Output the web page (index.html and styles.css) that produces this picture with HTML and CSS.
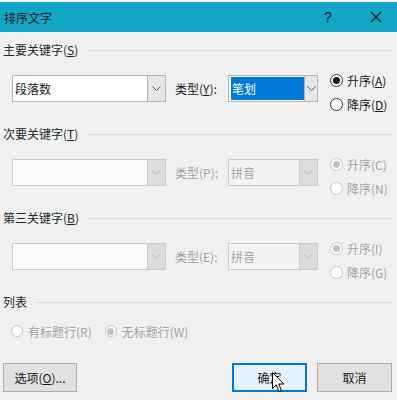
FILE: index.html
```html
<!DOCTYPE html>
<html lang="zh-CN">
<head>
  <meta charset="UTF-8">
  <title>排序文字</title>
  <meta name="viewport" content="width=device-width, initial-scale=1.0">
  <link rel="stylesheet" href="styles.css">
</head>
<body>

  <div class="top-strip"></div>

  <div class="title-bar">
    <span class="title">排序文字</span>
    <span class="tb-help">?</span>
    <span class="tb-close">
      <svg width="12" height="12" viewBox="0 0 12 12"><path d="M1 1 L11 11 M11 1 L1 11" stroke="#1a1a1a" stroke-width="1.3" fill="none"/></svg>
    </span>
  </div>

  <div class="dialog">

    <section class="group">
      <div class="group-head">主要关键字(<u>S</u>)</div>
      <div class="group-row">
        <div class="combo combo-key">
          <span class="combo-text">段落数</span>
          <span class="combo-btn"><svg width="9" height="5" viewBox="0 0 9 5"><path d="M0.5 0.5 L4.5 4.5 L8.5 0.5" stroke="#555" fill="none"/></svg></span>
        </div>
        <span class="type-label">类型(<u>Y</u>):</span>
        <div class="combo combo-type">
          <span class="combo-text"><span class="selected">笔划</span></span>
          <span class="combo-btn"><svg width="9" height="5" viewBox="0 0 9 5"><path d="M0.5 0.5 L4.5 4.5 L8.5 0.5" stroke="#555" fill="none"/></svg></span>
        </div>
        <div class="order">
          <div class="radio checked"><span class="dot"></span>升序(<u>A</u>)</div>
          <div class="radio"><span class="dot"></span>降序(<u>D</u>)</div>
        </div>
      </div>
    </section>

    <section class="group">
      <div class="group-head">次要关键字(<u>T</u>)</div>
      <div class="group-row disabled">
        <div class="combo combo-key">
          <span class="combo-text"></span>
          <span class="combo-btn"><svg width="9" height="5" viewBox="0 0 9 5"><path d="M0.5 0.5 L4.5 4.5 L8.5 0.5" stroke="#b8b8b8" fill="none"/></svg></span>
        </div>
        <span class="type-label">类型(P):</span>
        <div class="combo combo-type">
          <span class="combo-text">拼音</span>
          <span class="combo-btn"><svg width="9" height="5" viewBox="0 0 9 5"><path d="M0.5 0.5 L4.5 4.5 L8.5 0.5" stroke="#b8b8b8" fill="none"/></svg></span>
        </div>
        <div class="order">
          <div class="radio checked"><span class="dot"></span>升序(C)</div>
          <div class="radio"><span class="dot"></span>降序(N)</div>
        </div>
      </div>
    </section>

    <section class="group">
      <div class="group-head">第三关键字(<u>B</u>)</div>
      <div class="group-row disabled">
        <div class="combo combo-key">
          <span class="combo-text"></span>
          <span class="combo-btn"><svg width="9" height="5" viewBox="0 0 9 5"><path d="M0.5 0.5 L4.5 4.5 L8.5 0.5" stroke="#b8b8b8" fill="none"/></svg></span>
        </div>
        <span class="type-label">类型(E):</span>
        <div class="combo combo-type">
          <span class="combo-text">拼音</span>
          <span class="combo-btn"><svg width="9" height="5" viewBox="0 0 9 5"><path d="M0.5 0.5 L4.5 4.5 L8.5 0.5" stroke="#b8b8b8" fill="none"/></svg></span>
        </div>
        <div class="order">
          <div class="radio checked"><span class="dot"></span>升序(I)</div>
          <div class="radio"><span class="dot"></span>降序(G)</div>
        </div>
      </div>
    </section>

    <section class="list-group">
      <div class="group-head">列表</div>
      <div class="list-row disabled">
        <div class="radio"><span class="dot"></span>有标题行(R)</div>
        <div class="radio checked"><span class="dot"></span>无标题行(W)</div>
      </div>
    </section>

    <div class="buttons">
      <button class="btn">选项(<u>O</u>)...</button>
      <span class="spacer"></span>
      <button class="btn btn-default">确定
        <svg class="cursor" width="13" height="21" viewBox="0 0 13 21"><path d="M0.5 0.5 L0.5 16.5 L4.3 12.8 L7 19.5 L9.4 18.5 L6.8 12 L11.8 12 Z" fill="#fff" stroke="#000" stroke-width="1"/></svg>
      </button>
      <button class="btn">取消</button>
    </div>

  </div>

</body>
</html>
```

FILE: styles.css
```css
* {
  box-sizing: border-box;
}
body {
  margin: 0;
  width: 397px;
  height: 400px;
  overflow: hidden;
  background-color: #f0f0f0;
  color: #1a1a1a;
  font-family: "Noto Sans CJK SC", "Noto Sans", sans-serif;
  font-size: 12px;
}
u {
  text-decoration: underline;
  text-underline-offset: 1px;
}
.top-strip {
  height: 2px;
  background-color: #f6f6f6;
}
.title-bar {
  height: 30px;
  background-color: #12a5c6;
  display: flex;
  align-items: center;
  padding-left: 4px;
}
.title {
  flex: 1;
  color: #1a1a1a;
}
.tb-help {
  width: 14px;
  margin-right: 32px;
  font-family: "Liberation Sans", sans-serif;
  font-size: 14px;
  color: #1a1a1a;
}
.tb-close {
  width: 12px;
  height: 12px;
  margin-right: 15px;
  display: flex;
}
.dialog {
  padding-top: 10px;
}
.group {
  height: 84px;
}
.group-head {
  height: 16px;
  line-height: 16px;
  padding-left: 3px;
  padding-right: 4px;
  display: flex;
  align-items: center;
  color: #262626;
}
.group-head::after {
  content: "";
  flex: 1;
  height: 1px;
  margin-left: 9px;
  background-color: #dadada;
}
.group-row {
  display: flex;
  align-items: flex-start;
  margin-top: 10px;
  padding-left: 12px;
  height: 48px;
}
.combo {
  height: 27px;
  margin-top: 7px;
  display: flex;
  background-color: #fff;
  border: 1px solid #b4b4b4;
}
.combo-key {
  width: 154px;
}
.combo-type {
  width: 90px;
}
.combo-text {
  flex: 1;
  display: flex;
  align-items: center;
  padding-left: 2px;
}
.selected {
  background-color: #0078d7;
  color: #fff;
  width: 73px;
  height: 23px;
  line-height: 23px;
  padding-left: 1px;
}
.combo-btn {
  width: 18px;
  display: flex;
  align-items: center;
  justify-content: center;
  background-color: #e6e6e6;
  border-left: 1px solid #b4b4b4;
}
.type-label {
  width: 53px;
  margin-left: 9px;
  line-height: 41px;
}
.order {
  margin-left: 12px;
}
.radio {
  height: 24px;
  display: flex;
  align-items: center;
}
.dot {
  width: 13px;
  height: 13px;
  margin-right: 4px;
  border: 1px solid #333;
  border-radius: 50%;
  background-color: #fff;
  display: flex;
  align-items: center;
  justify-content: center;
}
.radio.checked .dot::after {
  content: "";
  width: 7px;
  height: 7px;
  border-radius: 50%;
  background-color: #1a1a1a;
}
.disabled {
  color: #a3a3a3;
}
.disabled .combo {
  border-color: #cccccc;
}
.disabled .combo-key {
  background-color: #fbfbfb;
}
.disabled .combo-type {
  background-color: #f3f3f3;
}
.disabled .combo-btn {
  background-color: #dcdcdc;
  border-left-color: #cccccc;
}
.disabled .dot {
  border-color: #c2c2c2;
}
.disabled .radio.checked .dot::after {
  background-color: #c2c2c2;
}
.list-row {
  display: flex;
  margin-top: 11px;
  padding-left: 11px;
  height: 20px;
}
.list-row .radio {
  height: 20px;
  margin-right: 13px;
}
.list-row .dot {
  width: 12px;
  height: 12px;
  margin-right: 5px;
}
.buttons {
  display: flex;
  margin-top: 22px;
  padding-left: 3px;
}
.spacer {
  flex: 1;
}
.btn {
  width: 75px;
  height: 29px;
  padding: 0;
  background-color: #e1e1e1;
  border: 1px solid #adadad;
  font-family: inherit;
  font-size: 12px;
  color: #1a1a1a;
}
.btn:first-child {
  width: 74px;
}
.btn-default {
  position: relative;
  margin-right: 10px;
  background-color: #e5f1fb;
  border: 2px solid #0078d7;
}
.btn + .btn:last-child {
  margin-right: 5px;
}
.cursor {
  position: absolute;
  left: 38px;
  top: 7px;
}
```
